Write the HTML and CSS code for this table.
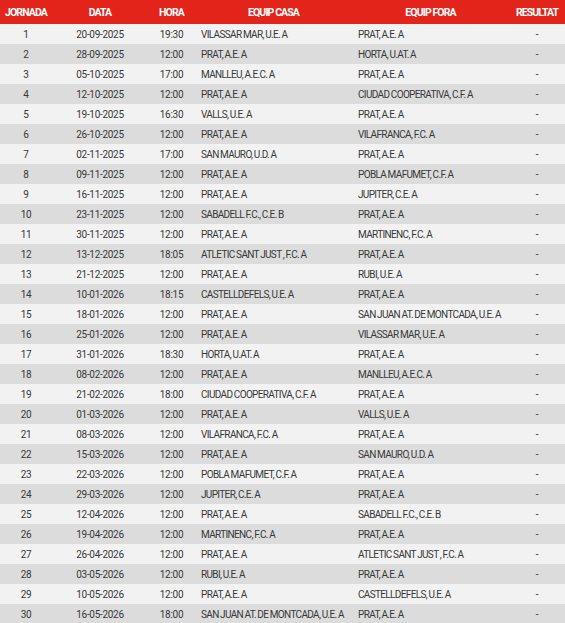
FILE: index.html
```html
<!DOCTYPE html>
<html>
<head>
<meta charset="utf-8">
<link rel="stylesheet" href="styles.css">
</head>
<body>
<table class="cal">
<colgroup>
<col class="c1"><col class="c2"><col class="c3"><col class="c4"><col class="c5"><col class="c6">
</colgroup>
<thead>
<tr><th>JORNADA</th><th>DATA</th><th>HORA</th><th>EQUIP CASA</th><th>EQUIP FORA</th><th>RESULTAT</th></tr>
</thead>
<tbody>
<tr><td>1</td><td>20-09-2025</td><td>19:30</td><td class="t">VILASSAR MAR, U.E. A</td><td class="t">PRAT, A.E. A</td><td>-</td></tr>
<tr><td>2</td><td>28-09-2025</td><td>12:00</td><td class="t">PRAT, A.E. A</td><td class="t">HORTA, U.AT. A</td><td>-</td></tr>
<tr><td>3</td><td>05-10-2025</td><td>17:00</td><td class="t">MANLLEU, A.E.C. A</td><td class="t">PRAT, A.E. A</td><td>-</td></tr>
<tr><td>4</td><td>12-10-2025</td><td>12:00</td><td class="t">PRAT, A.E. A</td><td class="t">CIUDAD COOPERATIVA, C.F. A</td><td>-</td></tr>
<tr><td>5</td><td>19-10-2025</td><td>16:30</td><td class="t">VALLS, U.E. A</td><td class="t">PRAT, A.E. A</td><td>-</td></tr>
<tr><td>6</td><td>26-10-2025</td><td>12:00</td><td class="t">PRAT, A.E. A</td><td class="t">VILAFRANCA, F.C. A</td><td>-</td></tr>
<tr><td>7</td><td>02-11-2025</td><td>17:00</td><td class="t">SAN MAURO, U.D. A</td><td class="t">PRAT, A.E. A</td><td>-</td></tr>
<tr><td>8</td><td>09-11-2025</td><td>12:00</td><td class="t">PRAT, A.E. A</td><td class="t">POBLA MAFUMET, C.F. A</td><td>-</td></tr>
<tr><td>9</td><td>16-11-2025</td><td>12:00</td><td class="t">PRAT, A.E. A</td><td class="t">JUPITER, C.E. A</td><td>-</td></tr>
<tr><td>10</td><td>23-11-2025</td><td>12:00</td><td class="t">SABADELL F.C., C.E. B</td><td class="t">PRAT, A.E. A</td><td>-</td></tr>
<tr><td>11</td><td>30-11-2025</td><td>12:00</td><td class="t">PRAT, A.E. A</td><td class="t">MARTINENC, F.C. A</td><td>-</td></tr>
<tr><td>12</td><td>13-12-2025</td><td>18:05</td><td class="t">ATLETIC SANT JUST , F.C. A</td><td class="t">PRAT, A.E. A</td><td>-</td></tr>
<tr><td>13</td><td>21-12-2025</td><td>12:00</td><td class="t">PRAT, A.E. A</td><td class="t">RUBI, U.E. A</td><td>-</td></tr>
<tr><td>14</td><td>10-01-2026</td><td>18:15</td><td class="t">CASTELLDEFELS, U.E. A</td><td class="t">PRAT, A.E. A</td><td>-</td></tr>
<tr><td>15</td><td>18-01-2026</td><td>12:00</td><td class="t">PRAT, A.E. A</td><td class="t">SAN JUAN AT. DE MONTCADA, U.E. A</td><td>-</td></tr>
<tr><td>16</td><td>25-01-2026</td><td>12:00</td><td class="t">PRAT, A.E. A</td><td class="t">VILASSAR MAR, U.E. A</td><td>-</td></tr>
<tr><td>17</td><td>31-01-2026</td><td>18:30</td><td class="t">HORTA, U.AT. A</td><td class="t">PRAT, A.E. A</td><td>-</td></tr>
<tr><td>18</td><td>08-02-2026</td><td>12:00</td><td class="t">PRAT, A.E. A</td><td class="t">MANLLEU, A.E.C. A</td><td>-</td></tr>
<tr><td>19</td><td>21-02-2026</td><td>18:00</td><td class="t">CIUDAD COOPERATIVA, C.F. A</td><td class="t">PRAT, A.E. A</td><td>-</td></tr>
<tr><td>20</td><td>01-03-2026</td><td>12:00</td><td class="t">PRAT, A.E. A</td><td class="t">VALLS, U.E. A</td><td>-</td></tr>
<tr><td>21</td><td>08-03-2026</td><td>12:00</td><td class="t">VILAFRANCA, F.C. A</td><td class="t">PRAT, A.E. A</td><td>-</td></tr>
<tr><td>22</td><td>15-03-2026</td><td>12:00</td><td class="t">PRAT, A.E. A</td><td class="t">SAN MAURO, U.D. A</td><td>-</td></tr>
<tr><td>23</td><td>22-03-2026</td><td>12:00</td><td class="t">POBLA MAFUMET, C.F. A</td><td class="t">PRAT, A.E. A</td><td>-</td></tr>
<tr><td>24</td><td>29-03-2026</td><td>12:00</td><td class="t">JUPITER, C.E. A</td><td class="t">PRAT, A.E. A</td><td>-</td></tr>
<tr><td>25</td><td>12-04-2026</td><td>12:00</td><td class="t">PRAT, A.E. A</td><td class="t">SABADELL F.C., C.E. B</td><td>-</td></tr>
<tr><td>26</td><td>19-04-2026</td><td>12:00</td><td class="t">MARTINENC, F.C. A</td><td class="t">PRAT, A.E. A</td><td>-</td></tr>
<tr><td>27</td><td>26-04-2026</td><td>12:00</td><td class="t">PRAT, A.E. A</td><td class="t">ATLETIC SANT JUST , F.C. A</td><td>-</td></tr>
<tr><td>28</td><td>03-05-2026</td><td>12:00</td><td class="t">RUBI, U.E. A</td><td class="t">PRAT, A.E. A</td><td>-</td></tr>
<tr><td>29</td><td>10-05-2026</td><td>12:00</td><td class="t">PRAT, A.E. A</td><td class="t">CASTELLDEFELS, U.E. A</td><td>-</td></tr>
<tr><td>30</td><td>16-05-2026</td><td>18:00</td><td class="t">SAN JUAN AT. DE MONTCADA, U.E. A</td><td class="t">PRAT, A.E. A</td><td>-</td></tr>
</tbody>
</table>
</body>
</html>
```
FILE: styles.css
```css
html, body {
  margin: 0;
  padding: 0;
  background: #ffffff;
}
.cal {
  width: 565px;
  border-collapse: collapse;
  table-layout: fixed;
  font-family: Roboto, "Liberation Sans", sans-serif;
}
.c1 { width: 52px; }
.c2 { width: 96px; }
.c3 { width: 47px; }
.c4 { width: 157px; }
.c5 { width: 157px; }
.c6 { width: 56px; }
.cal th {
  height: 24px;
  padding: 0;
  background: #e2241b;
  color: #ffffff;
  font-size: 10.5px;
  font-weight: 700;
  letter-spacing: -0.9px;
  text-align: center;
  vertical-align: middle;
}
.cal td {
  height: 20px;
  padding: 0;
  font-size: 10px;
  letter-spacing: -0.3px;
  color: #383838;
  text-align: center;
  vertical-align: middle;
  white-space: nowrap;
  overflow: hidden;
}
.cal td.t {
  text-align: left;
  padding-left: 6px;
  letter-spacing: -0.65px;
  word-spacing: -0.4px;
}
.cal tbody tr:nth-child(odd) { background: #f2f2f2; }
.cal tbody tr:nth-child(even) { background: #dcdcdc; }
```
